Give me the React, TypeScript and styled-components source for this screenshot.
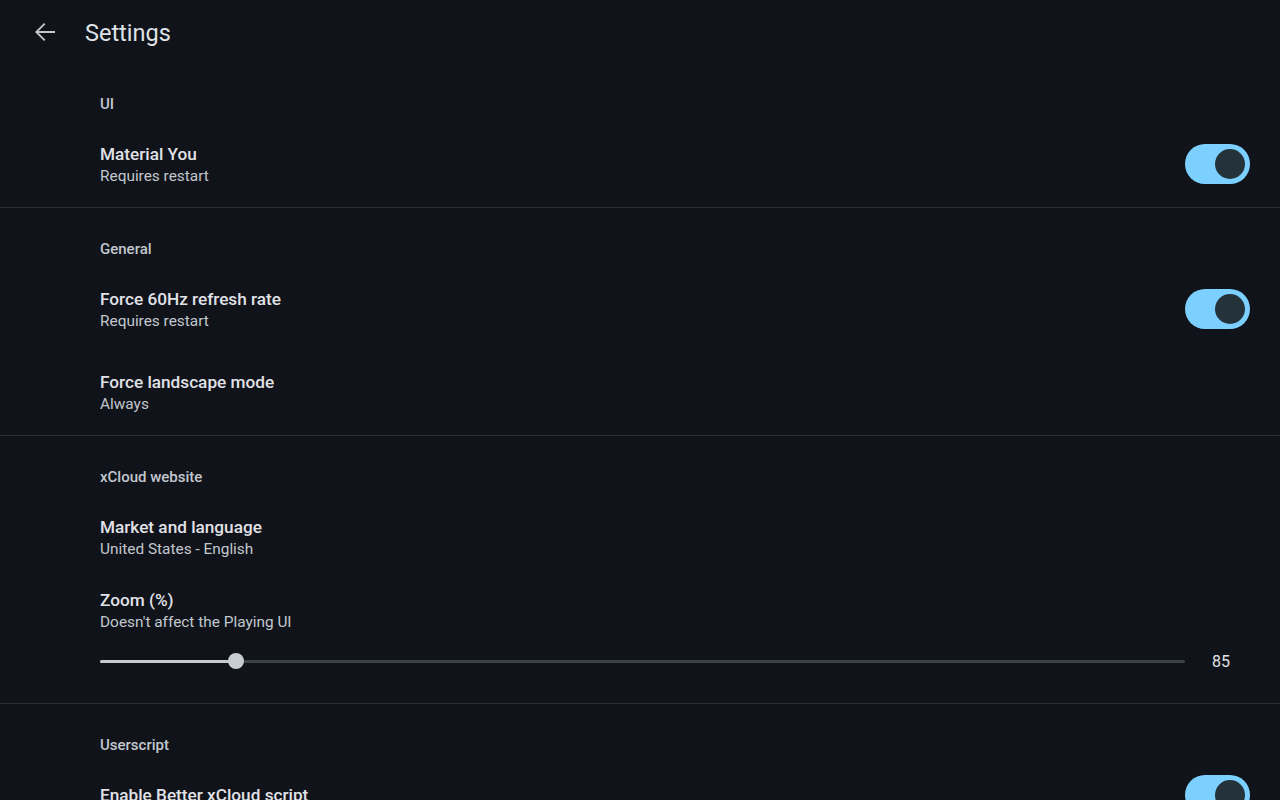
import React from 'react';
import styled, { createGlobalStyle } from 'styled-components';

const GlobalStyle = createGlobalStyle`
  html, body {
    margin: 0;
    padding: 0;
    background: #10141a;
    overflow: hidden;
  }
  body {
    font-family: Roboto, "Noto Sans", "Liberation Sans", sans-serif;
    color: #e1e2e8;
  }
`;

type Item = {
  title: string;
  summary?: string;
  toggle?: boolean;
  slider?: { value: number; percent: number };
};

type Group = { label: string; items: Item[] };

const groups: Group[] = [
  { label: 'UI', items: [{ title: 'Material You', summary: 'Requires restart', toggle: true }] },
  {
    label: 'General',
    items: [
      { title: 'Force 60Hz refresh rate', summary: 'Requires restart', toggle: true },
      { title: 'Force landscape mode', summary: 'Always' },
    ],
  },
  {
    label: 'xCloud website',
    items: [
      { title: 'Market and language', summary: 'United States - English' },
      { title: 'Zoom (%)', summary: "Doesn't affect the Playing UI", slider: { value: 85, percent: 12.5 } },
    ],
  },
  {
    label: 'Userscript',
    items: [{ title: 'Enable Better xCloud script', toggle: true }],
  },
];

function BackArrow() {
  return (
    <svg width="30" height="30" viewBox="0 0 24 24" fill="#c4c8cd">
      <path d="M20 11.25H6.9l5.45-5.45-1.05-1.05L4 12l7.3 7.25 1.05-1.05-5.45-5.45H20z" />
    </svg>
  );
}

function App() {
  return (
    <Page>
      <GlobalStyle />
      <TopBar>
        <BackButton aria-label="Back">
          <BackArrow />
        </BackButton>
        <Heading>Settings</Heading>
      </TopBar>

      {groups.map((g) => (
        <Section key={g.label}>
          <SectionLabel>{g.label}</SectionLabel>
          {g.items.map((it) =>
            it.slider ? (
              <SliderRow key={it.title}>
                <Title>{it.title}</Title>
                <Summary>{it.summary}</Summary>
                <SliderLine>
                  <Track>
                    <ActiveTrack style={{ width: `${it.slider.percent}%` }} />
                    <Thumb style={{ left: `${it.slider.percent}%` }} />
                  </Track>
                  <SliderValue>{it.slider.value}</SliderValue>
                </SliderLine>
              </SliderRow>
            ) : (
              <Row key={it.title} $single={!it.summary}>
                <TextBlock>
                  <Title>{it.title}</Title>
                  {it.summary && <Summary>{it.summary}</Summary>}
                </TextBlock>
                {it.toggle && (
                  <Switch $lift={!!it.summary}>
                    <Knob />
                  </Switch>
                )}
              </Row>
            )
          )}
        </Section>
      ))}
    </Page>
  );
}

export default App;

const Page = styled.div`
  width: 1280px;
  height: 800px;
  overflow: hidden;
  background: #10141a;
`;

const TopBar = styled.div`
  height: 63px;
  display: flex;
  align-items: center;
  padding-left: 30px;
`;

const BackButton = styled.div`
  width: 30px;
  height: 30px;
  display: flex;
  align-items: center;
  justify-content: center;
`;

const Heading = styled.div`
  margin-left: 25px;
  font-size: 23.5px;
  line-height: 30px;
  margin-top: 2px;
  color: #dfe2e7;
`;

const Section = styled.div`
  border-bottom: 1px solid #262f34;
  &:last-child {
    border-bottom: none;
  }
`;

const SectionLabel = styled.div`
  padding: 32px 0 11px 100px;
  font-size: 15px;
  line-height: 18px;
  font-weight: 500;
  color: #c2c7ce;
`;

const Row = styled.div<{ $single?: boolean }>`
  height: ${(p) => (p.$single ? 60 : 83)}px;
  display: flex;
  align-items: center;
  justify-content: space-between;
  padding: 0 30px 0 100px;
  box-sizing: border-box;
`;

const TextBlock = styled.div`
  display: flex;
  flex-direction: column;
  margin-bottom: 1px;
`;

const Title = styled.div`
  font-size: 17.2px;
  line-height: 22px;
  font-weight: 500;
  color: #e1e2e8;
`;

const Summary = styled.div`
  font-size: 15.4px;
  line-height: 22px;
  color: #c2c7ce;
`;

const Switch = styled.div<{ $lift?: boolean }>`
  width: 65px;
  height: 40px;
  border-radius: 20px;
  background: #7cd0ff;
  display: flex;
  align-items: center;
  justify-content: flex-end;
  padding-right: 5px;
  box-sizing: border-box;
  margin-bottom: ${(p) => (p.$lift ? 3 : 0)}px;
`;

const Knob = styled.div`
  width: 30px;
  height: 30px;
  border-radius: 50%;
  background: #243239;
`;

const SliderRow = styled.div`
  padding: 9px 50px 14px 100px;
`;

const SliderLine = styled.div`
  height: 56px;
  display: flex;
  align-items: center;
  gap: 26px;
`;

const Track = styled.div`
  position: relative;
  flex: 1;
  height: 3px;
  border-radius: 2px;
  background: #3b4349;
`;

const ActiveTrack = styled.div`
  height: 100%;
  border-radius: 2px;
  background: #c6cbd0;
`;

const Thumb = styled.div`
  position: absolute;
  top: 50%;
  width: 16px;
  height: 16px;
  border-radius: 50%;
  background: #c8cdd2;
  transform: translate(-50%, -50%);
`;

const SliderValue = styled.div`
  font-size: 16px;
  color: #e1e2e8;
  width: 19px;
  text-align: right;
`;
